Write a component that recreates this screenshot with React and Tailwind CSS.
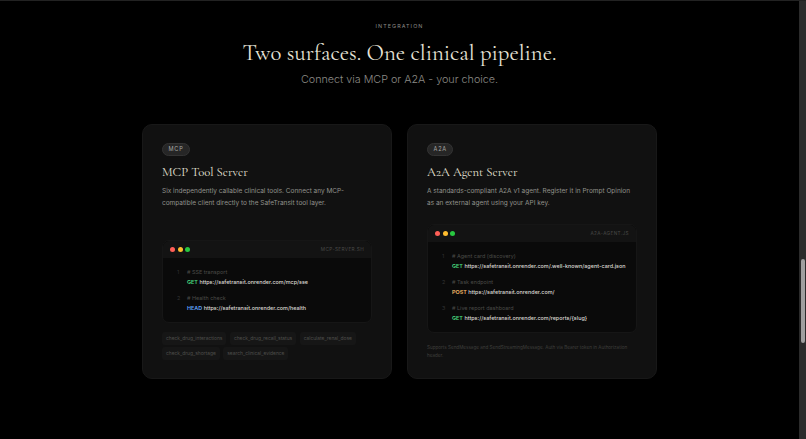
import React from 'react';

const serif = "font-['Cormorant_Garamond','Liberation_Serif',serif]";

const methodColors = {
  GET: 'text-[#4ade80]',
  HEAD: 'text-[#60a5fa]',
  POST: 'text-[#fbbf6a]',
};

const CodeWindow = ({ name, entries, className }) => (
  <div className={`rounded-[7px] border border-[#161616] bg-[#0a0a0a] overflow-hidden ${className}`}>
    <div className="h-[17px] flex items-center justify-between pl-[7px] pr-[7px] bg-[#131313]">
      <div className="flex items-center gap-[2.5px]">
        <span className="w-[5px] h-[5px] rounded-full bg-[#ff5f57]" />
        <span className="w-[5px] h-[5px] rounded-full bg-[#febc2e]" />
        <span className="w-[5px] h-[5px] rounded-full bg-[#28c840]" />
      </div>
      <span className="text-[4.7px] tracking-[0.08em] text-[#4a4a48]">{name}</span>
    </div>
    <div className="pt-[10px] pb-[9px] pl-[14px] flex flex-col gap-[7px]">
      {entries.map((entry, i) => (
        <div key={entry.comment} className="flex">
          <span className="w-[10px] text-[5.45px] leading-[9.5px] text-[#333]">{i + 1}</span>
          <div>
            <div className="text-[5.45px] leading-[9.5px] text-[#4a4a48]"># {entry.comment}</div>
            <div className="text-[5.45px] leading-[9.5px] font-medium text-[#dedcd6] whitespace-nowrap">
              <span className={`font-semibold ${methodColors[entry.method]}`}>{entry.method}</span> {entry.url}
            </div>
          </div>
        </div>
      ))}
    </div>
  </div>
);

const Card = ({ badge, title, desc, children }) => (
  <div className="w-[250px] h-[255px] rounded-[10px] border border-[#181818] bg-[#111111] px-[19px] pt-[18px] flex flex-col">
    <span className="self-start h-[13px] flex items-center px-[5.5px] rounded-full border border-[#333] bg-[#262626] text-[5.6px] tracking-[0.14em] text-[#a8a8a4]">
      {badge}
    </span>
    <h3 className={`${serif} mt-[8px] text-[12.7px] leading-[17px] font-normal text-[#e8e4d8]`}>{title}</h3>
    <p className="mt-[5px] text-[6.5px] leading-[11.5px] text-[#92918c]">{desc}</p>
    {children}
  </div>
);

const tools = ['check_drug_interactions', 'check_drug_recall_status', 'calculate_renal_dose', 'check_drug_shortage', 'search_clinical_evidence'];

export default function App() {
  return (
    <div className="relative h-[439px] overflow-hidden bg-black font-['Inter','Liberation_Sans',sans-serif] border-t border-[#222]">
      <div className="pr-[7px] flex flex-col items-center">
        <p className="mt-[21px] text-[5.4px] leading-[8px] tracking-[0.2em] text-[#8c8b86]">INTEGRATION</p>
        <h2 className={`${serif} mt-[8px] text-[22.8px] leading-[30px] font-normal text-[#e8e4d8]`}>
          Two surfaces. One clinical pipeline.
        </h2>
        <p className="mt-[4px] text-[10.75px] leading-[16px] font-light text-[#8c8b86]">Connect via MCP or A2A - your choice.</p>

        <div className="mt-[36px] flex gap-[15px]">
          <Card
            badge="MCP"
            title="MCP Tool Server"
            desc="Six independently callable clinical tools. Connect any MCP-compatible client directly to the SafeTransit tool layer."
          >
            <CodeWindow
              name="MCP-SERVER.SH"
              className="mt-[31px]"
              entries={[
                { comment: 'SSE transport', method: 'GET', url: 'https://safetransit.onrender.com/mcp/sse' },
                { comment: 'Health check', method: 'HEAD', url: 'https://safetransit.onrender.com/health' },
              ]}
            />
            <div className="mt-[9px] flex flex-wrap gap-x-[3.5px] gap-y-[2px]">
              {tools.map((tool) => (
                <span key={tool} className="h-[13px] flex items-center px-[4px] rounded-[3px] bg-[#161616] text-[4.9px] text-[#4f4f4c]">
                  {tool}
                </span>
              ))}
            </div>
          </Card>
          <Card
            badge="A2A"
            title="A2A Agent Server"
            desc="A standards-compliant A2A v1 agent. Register it in Prompt Opinion as an external agent using your API key."
          >
            <CodeWindow
              name="A2A-AGENT.JS"
              className="mt-[15px]"
              entries={[
                { comment: 'Agent card (discovery)', method: 'GET', url: 'https://safetransit.onrender.com/.well-known/agent-card.json' },
                { comment: 'Task endpoint', method: 'POST', url: 'https://safetransit.onrender.com/' },
                { comment: 'Live report dashboard', method: 'GET', url: 'https://safetransit.onrender.com/reports/{slug}' },
              ]}
            />
            <p className="mt-[11px] text-[4.6px] leading-[8px] text-[#3f3f3c]">
              Supports SendMessage and SendStreamingMessage. Auth via Bearer token in Authorization header.
            </p>
          </Card>
        </div>
      </div>
      <div className="absolute top-0 right-0 bottom-0 w-[7px] bg-[#2b2b2b]">
        <div className="absolute top-[258px] left-[2px] w-[4px] h-[84px] rounded-full bg-[#9f9f9f]" />
      </div>
    </div>
  );
}
